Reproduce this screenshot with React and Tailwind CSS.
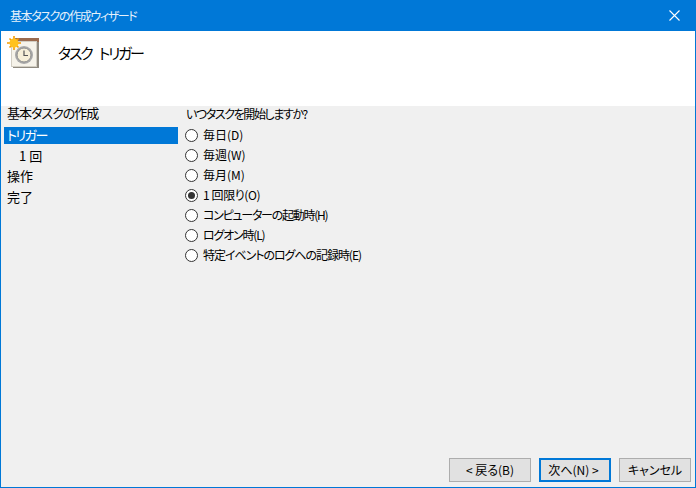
import React from "react";

const FONT = "font-['Noto_Sans_CJK_JP','Liberation_Sans',sans-serif] [font-feature-settings:'palt']";

const options = [
  { label: "毎日(D)", track: "" },
  { label: "毎週(W)", track: "" },
  { label: "毎月(M)", track: "" },
  { label: "1 回限り(O)", track: "tracking-[-0.4px]", checked: true },
  { label: "コンピューターの起動時(H)", track: "tracking-[-1.25px]" },
  { label: "ログオン時(L)", track: "tracking-[-1.2px]" },
  { label: "特定イベントのログへの記録時(E)", track: "tracking-[-1.05px]" },
];

const TaskIcon = () => (
  <svg width="34" height="34" viewBox="0 0 34 34" className="shrink-0">
    <rect x="6" y="4" width="26" height="28" fill="#8f8a80" />
    <rect x="8" y="2" width="24" height="4" fill="#9a6b4f" />
    <rect x="4.5" y="5.5" width="25" height="25" fill="#f6f3ea" stroke="#d2cec3" />
    <circle cx="17" cy="19" r="9" fill="#a9a9a9" />
    <circle cx="17" cy="19" r="7" fill="#f6efd8" stroke="#8e8e8e" />
    <path d="M17 14.5V19.5H21" fill="none" stroke="#555" strokeWidth="1.2" />
    <g stroke="#f59b00" strokeWidth="1.6">
      <path d="M7 0V14M0 7H14M2.5 2.5L11.5 11.5M11.5 2.5L2.5 11.5" />
    </g>
    <circle cx="7" cy="7" r="4.5" fill="#ffc21f" />
  </svg>
);

const Radio = ({ checked }) => (
  <span className="flex h-[13px] w-[13px] shrink-0 items-center justify-center rounded-full border border-[#333333] bg-white">
    {checked && <span className="h-[7px] w-[7px] rounded-full bg-[#333333]" />}
  </span>
);

const Button = ({ children, primary, width }) => (
  <button
    className={`flex h-[24px] items-center justify-center bg-[#e1e1e1] text-[12px] text-black ${width} ${
      primary ? "border-2 border-[#0078d7] pr-[3px]" : "border border-[#adadad]"
    }`}
  >
    {children}
  </button>
);

export default function App() {
  return (
    <div className={`flex h-[488px] w-[696px] flex-col overflow-hidden border-x border-b border-[#0078d7] bg-[#f0f0f0] ${FONT}`}>
      {/* TITLE BAR */}
      <div className="flex h-[31px] shrink-0 items-center justify-between bg-[#0078d7] pl-[9px] pr-[15px] text-white">
        <span className="text-[12px] leading-none tracking-[-1.4px] text-[#e6f1fb]">基本タスクの作成ウィザード</span>
        <svg width="11" height="11" viewBox="0 0 11 11">
          <path d="M0.5 0.5L10.5 10.5M10.5 0.5L0.5 10.5" stroke="white" strokeWidth="1.1" />
        </svg>
      </div>

      {/* HEADER */}
      <div className="flex h-[75px] shrink-0 items-start bg-white pl-[6px] pt-[5px]">
        <TaskIcon />
        <span className="ml-[17px] mt-[5px] text-[15px] leading-[24px] tracking-[-2.2px] text-black [word-spacing:6px]">タスク トリガー</span>
      </div>

      {/* BODY */}
      <div className="flex min-h-0 flex-1 pl-[3px]">
        <div className="w-[174px] shrink-0 text-[13px] text-black">
          <div className="mb-[7px] flex h-[14px] items-center pl-[3px] tracking-[-1px]">基本タスクの作成</div>
          <div className="flex h-[17px] items-center bg-[#0078d7] pb-[2px] pl-[3px] tracking-[-1.5px] text-white">トリガー</div>
          <div className="mt-[3px] flex h-[20px] items-center pb-[2px] pl-[15px]">1 回</div>
          <div className="flex h-[20px] items-center pb-[2px] pl-[3px]">操作</div>
          <div className="mt-[1px] flex h-[20px] items-center pb-[2px] pl-[3px]">完了</div>
        </div>

        <div className="flex min-w-0 flex-1 flex-col pl-[7px]">
          <div className="mb-[4px] flex h-[15px] items-center pl-[1px] text-[12px] tracking-[-1.4px] text-black">いつタスクを開始しますか?</div>
          {options.map((o) => (
            <label key={o.label} className="flex h-[20px] items-center gap-[5px] text-[12px] text-black">
              <Radio checked={o.checked} />
              <span className={o.track}>{o.label}</span>
            </label>
          ))}
          <div className="mt-auto flex justify-end gap-[8px] pb-[5px] pr-[4px]">
            <Button width="w-[82px]">&lt; 戻る(B)</Button>
            <Button primary width="w-[72px]">次へ(N) &gt;</Button>
            <Button width="w-[72px]">キャンセル</Button>
          </div>
        </div>
      </div>
    </div>
  );
}
